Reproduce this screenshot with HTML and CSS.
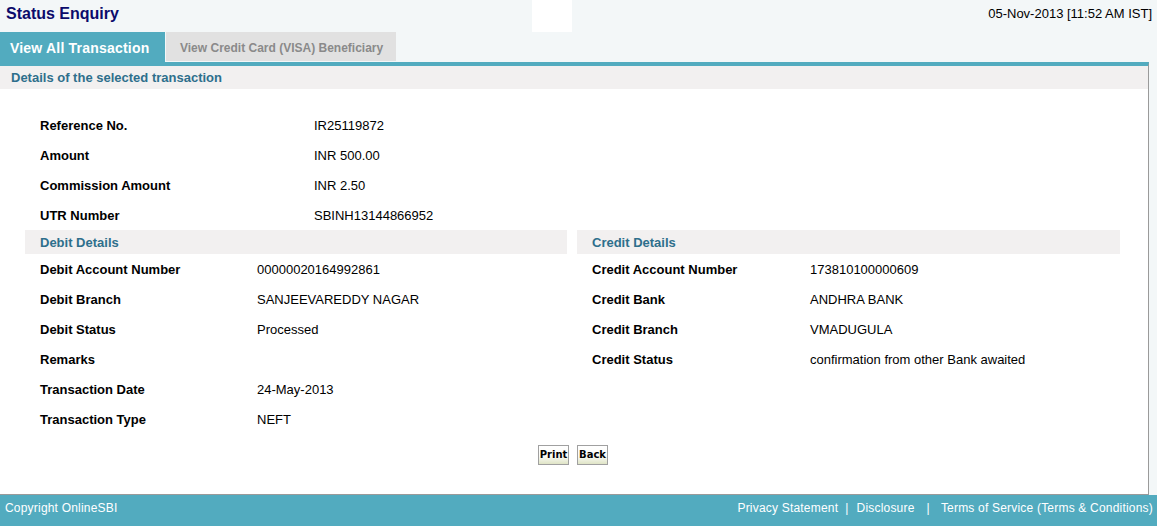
FILE: index.html
```html
<!DOCTYPE html>
<html>
<head>
<meta charset="utf-8">
<link rel="stylesheet" href="styles.css">
</head>
<body>
<div class="page">
  <header class="top">
    <h1 class="title">Status Enquiry</h1>
    <div class="logo-box"></div>
    <div class="date">05-Nov-2013 [11:52 AM IST]</div>
  </header>
  <nav class="tabs">
    <div class="tab active">View All Transaction</div>
    <div class="tab">View Credit Card (VISA) Beneficiary</div>
  </nav>
  <section class="panel">
    <div class="panel-head">Details of the selected transaction</div>
    <div class="summary">
      <div class="row"><span class="lbl">Reference No.</span><span class="val">IR25119872</span></div>
      <div class="row"><span class="lbl">Amount</span><span class="val">INR 500.00</span></div>
      <div class="row"><span class="lbl">Commission Amount</span><span class="val">INR 2.50</span></div>
      <div class="row"><span class="lbl">UTR Number</span><span class="val">SBINH13144866952</span></div>
    </div>
    <div class="cols">
      <div class="col">
        <div class="sub-head">Debit Details</div>
        <div class="row"><span class="lbl">Debit Account Number</span><span class="val">00000020164992861</span></div>
        <div class="row"><span class="lbl">Debit Branch</span><span class="val">SANJEEVAREDDY NAGAR</span></div>
        <div class="row"><span class="lbl">Debit Status</span><span class="val">Processed</span></div>
        <div class="row"><span class="lbl">Remarks</span><span class="val"></span></div>
        <div class="row"><span class="lbl">Transaction Date</span><span class="val">24-May-2013</span></div>
        <div class="row"><span class="lbl">Transaction Type</span><span class="val">NEFT</span></div>
      </div>
      <div class="col">
        <div class="sub-head">Credit Details</div>
        <div class="row"><span class="lbl">Credit Account Number</span><span class="val">173810100000609</span></div>
        <div class="row"><span class="lbl">Credit Bank</span><span class="val">ANDHRA BANK</span></div>
        <div class="row"><span class="lbl">Credit Branch</span><span class="val">VMADUGULA</span></div>
        <div class="row"><span class="lbl">Credit Status</span><span class="val">confirmation from other Bank awaited</span></div>
      </div>
    </div>
    <div class="actions">
      <button class="btn" type="button">Print</button>
      <button class="btn" type="button">Back</button>
    </div>
  </section>
  <footer class="foot">
    <span class="copy">Copyright OnlineSBI</span>
    <span class="links">
      <span>Privacy Statement</span><span class="sep">|</span><span>Disclosure</span><span class="sep sep2">|</span><span>Terms of Service (Terms &amp; Conditions)</span>
    </span>
  </footer>
</div>
</body>
</html>
```

FILE: styles.css
```css
* { box-sizing: border-box; }
html, body {
  margin: 0;
  padding: 0;
  background: #f3f7f8;
  font-family: "Liberation Sans", Arial, sans-serif;
  color: #000;
}
.page {
  display: flex;
  flex-direction: column;
  min-height: 526px;
}
.top {
  display: grid;
  grid-template-columns: 532px 40px 1fr;
  height: 32px;
}
.title {
  margin: 0;
  padding: 5px 0 0 6px;
  font-size: 16px;
  font-weight: bold;
  color: #0b0b6b;
  line-height: 18px;
}
.logo-box {
  background: #fff;
}
.date {
  text-align: right;
  padding: 6px 5px 0 0;
  font-size: 13px;
  line-height: 16px;
}
.tabs {
  display: flex;
  gap: 1px;
  height: 30px;
}
.tab {
  width: 230px;
  background: #e1e1e1;
  color: #8a8a8a;
  font-weight: bold;
  font-size: 12px;
  padding: 3px 0 0 14px;
  line-height: 26px;
  height: 29px;
}
.tab.active {
  width: 165px;
  height: 30px;
  background: #52abbf;
  color: #fff;
  font-size: 14px;
  letter-spacing: 0.2px;
  padding-left: 10px;
}
.panel {
  width: 1149px;
  background: #fff;
  border-top: 4px solid #52abbf;
  border-right: 1px solid #9a9a9a;
  border-bottom: 1px solid #9a9a9a;
  height: 433px;
}
.panel-head {
  height: 23px;
  background: #f2f0f0;
  color: #2e6f8c;
  font-weight: bold;
  font-size: 13px;
  line-height: 24px;
  padding-left: 11px;
  overflow: hidden;
}
.summary {
  padding: 21px 0 0 40px;
}
.summary .lbl { width: 274px; }
.row {
  display: flex;
  height: 30px;
  align-items: center;
}
.lbl {
  font-weight: bold;
  font-size: 13px;
  flex: none;
}
.val {
  font-size: 13px;
}
.cols {
  display: grid;
  grid-template-columns: 542px 543px;
  column-gap: 10px;
  padding-left: 25px;
}
.col .row { padding-left: 15px; }
.col .lbl { width: 217px; }
.col:last-child .lbl { width: 218px; }
.sub-head {
  height: 24px;
  background: #f2f0f0;
  color: #2e6f8c;
  font-weight: bold;
  font-size: 13px;
  line-height: 25px;
  padding-left: 15px;
  overflow: hidden;
}
.actions {
  display: flex;
  justify-content: center;
  gap: 8px;
  padding: 11px 0 0 0;
  margin-left: -2px;
}
.btn {
  font-family: "DejaVu Sans", Verdana, sans-serif;
  font-weight: bold;
  font-size: 10px;
  height: 20px;
  width: 31px;
  padding: 0;
  border: 1px solid #a0a0a0;
  background: linear-gradient(#ffffff 0%, #fbfbf7 55%, #dfe4c6 100%);
  color: #000;
  line-height: 18px;
}
.foot {
  flex: 1;
  display: flex;
  justify-content: space-between;
  background: #52abbf;
  color: #fff;
  font-size: 12px;
  letter-spacing: 0.2px;
  line-height: 27px;
  padding: 0 4px 0 5px;
}
.links .sep {
  margin: 0 8px 0 7px;
}
.links .sep2 {
  margin: 0 11px 0 12px;
}
```
